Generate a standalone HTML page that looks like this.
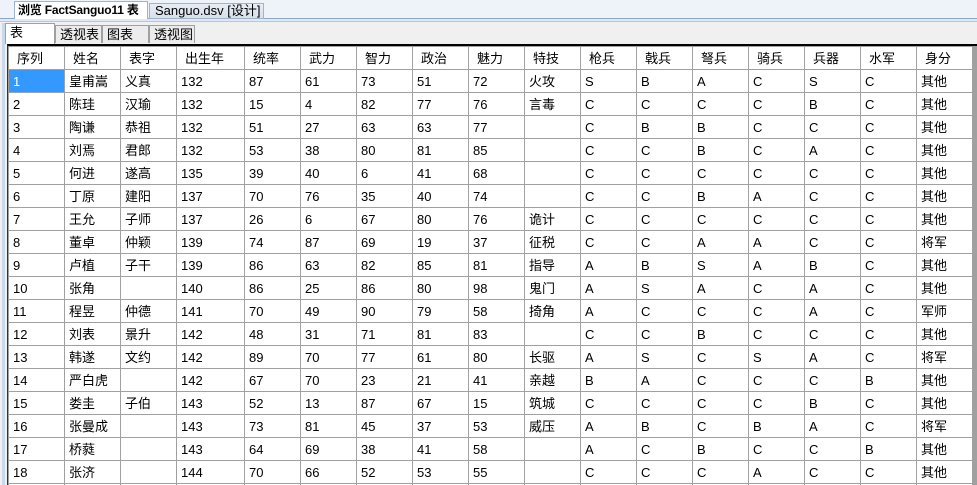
<!DOCTYPE html>
<html><head><meta charset="utf-8"><style>
*{margin:0;padding:0;box-sizing:border-box}
html,body{width:977px;height:485px;overflow:hidden}
body{background:#f0f0f0;font-family:"Liberation Sans","Noto Sans CJK SC",sans-serif;font-size:13px;color:#000;position:relative}
.top{position:absolute;left:0;top:0;width:977px;height:19px;background:#eef3fa;border-bottom:1px solid #8ba7c4}
.t1{position:absolute;left:14px;top:1px;width:134px;height:18px;padding:0 3px;font-weight:bold;font-size:12px;background:#fff;border:1px solid #9fb4cc;border-bottom:none;line-height:16px;white-space:nowrap;overflow:hidden;letter-spacing:-0.2px}
.t2{position:absolute;left:149px;top:3px;height:16px;width:115px;padding-left:5px;font-size:13px;background:linear-gradient(#e8eef6,#d7e0ec);border:1px solid #9fb4cc;line-height:14px}
.line2{position:absolute;left:0;top:19px;width:977px;height:3px;background:#dfe9f5;border-bottom:1px solid #b4c8dc}
.st{position:absolute;top:25px;height:18px;border:1px solid #a0a0a0;border-bottom:none;background:#ececec;padding-left:4px;line-height:17px}
.grid{position:absolute;left:7px;top:44px;width:970px;height:441px;background:#a0a0a0;border-top:2px solid #000;border-left:1px solid #333;overflow:hidden}
table{border-collapse:collapse;table-layout:fixed;background:#fff}
td{border:1px solid #a0a0a0;height:23px;padding:1px 0 0 4px;white-space:nowrap;overflow:hidden;line-height:20px}
tr.h td{height:23px;padding-left:8px}
td.sel{background:#3399ff;color:#fff}
</style></head><body>
<div class="top"></div>
<div class="t1">浏览 FactSanguo11 表</div>
<div class="t2">Sanguo.dsv [设计]</div>
<div class="line2"></div>
<div style="position:absolute;left:2px;top:23px;width:3px;height:462px;background:#c9d9ec"></div>
<div class="st" style="left:5px;top:23px;width:50px;height:21px;background:#fff;z-index:2">表</div>
<div class="st" style="left:55px;width:47px">透视表</div>
<div class="st" style="left:102px;width:47px">图表</div>
<div class="st" style="left:149px;width:46px">透视图</div>
<div class="grid">
<table>
<colgroup><col style="width:56px"><col style="width:56px"><col style="width:56px"><col style="width:68px"><col style="width:56px"><col style="width:56px"><col style="width:56px"><col style="width:56px"><col style="width:56px"><col style="width:56px"><col style="width:56px"><col style="width:56px"><col style="width:56px"><col style="width:56px"><col style="width:56px"><col style="width:56px"><col style="width:56px"></colgroup>
<tr class="h"><td>序列</td><td>姓名</td><td>表字</td><td>出生年</td><td>统率</td><td>武力</td><td>智力</td><td>政治</td><td>魅力</td><td>特技</td><td>枪兵</td><td>戟兵</td><td>弩兵</td><td>骑兵</td><td>兵器</td><td>水军</td><td>身分</td></tr>
<tr><td class="sel">1</td><td>皇甫嵩</td><td>义真</td><td>132</td><td>87</td><td>61</td><td>73</td><td>51</td><td>72</td><td>火攻</td><td>S</td><td>B</td><td>A</td><td>C</td><td>S</td><td>C</td><td>其他</td></tr>
<tr><td>2</td><td>陈珪</td><td>汉瑜</td><td>132</td><td>15</td><td>4</td><td>82</td><td>77</td><td>76</td><td>言毒</td><td>C</td><td>C</td><td>C</td><td>C</td><td>B</td><td>C</td><td>其他</td></tr>
<tr><td>3</td><td>陶谦</td><td>恭祖</td><td>132</td><td>51</td><td>27</td><td>63</td><td>63</td><td>77</td><td></td><td>C</td><td>B</td><td>B</td><td>C</td><td>C</td><td>C</td><td>其他</td></tr>
<tr><td>4</td><td>刘焉</td><td>君郎</td><td>132</td><td>53</td><td>38</td><td>80</td><td>81</td><td>85</td><td></td><td>C</td><td>C</td><td>B</td><td>C</td><td>A</td><td>C</td><td>其他</td></tr>
<tr><td>5</td><td>何进</td><td>遂高</td><td>135</td><td>39</td><td>40</td><td>6</td><td>41</td><td>68</td><td></td><td>C</td><td>C</td><td>C</td><td>C</td><td>C</td><td>C</td><td>其他</td></tr>
<tr><td>6</td><td>丁原</td><td>建阳</td><td>137</td><td>70</td><td>76</td><td>35</td><td>40</td><td>74</td><td></td><td>C</td><td>C</td><td>B</td><td>A</td><td>C</td><td>C</td><td>其他</td></tr>
<tr><td>7</td><td>王允</td><td>子师</td><td>137</td><td>26</td><td>6</td><td>67</td><td>80</td><td>76</td><td>诡计</td><td>C</td><td>C</td><td>C</td><td>C</td><td>C</td><td>C</td><td>其他</td></tr>
<tr><td>8</td><td>董卓</td><td>仲颖</td><td>139</td><td>74</td><td>87</td><td>69</td><td>19</td><td>37</td><td>征税</td><td>C</td><td>C</td><td>A</td><td>A</td><td>C</td><td>C</td><td>将军</td></tr>
<tr><td>9</td><td>卢植</td><td>子干</td><td>139</td><td>86</td><td>63</td><td>82</td><td>85</td><td>81</td><td>指导</td><td>A</td><td>B</td><td>S</td><td>A</td><td>B</td><td>C</td><td>其他</td></tr>
<tr><td>10</td><td>张角</td><td></td><td>140</td><td>86</td><td>25</td><td>86</td><td>80</td><td>98</td><td>鬼门</td><td>A</td><td>S</td><td>A</td><td>C</td><td>A</td><td>C</td><td>其他</td></tr>
<tr><td>11</td><td>程昱</td><td>仲德</td><td>141</td><td>70</td><td>49</td><td>90</td><td>79</td><td>58</td><td>掎角</td><td>A</td><td>C</td><td>C</td><td>C</td><td>A</td><td>C</td><td>军师</td></tr>
<tr><td>12</td><td>刘表</td><td>景升</td><td>142</td><td>48</td><td>31</td><td>71</td><td>81</td><td>83</td><td></td><td>C</td><td>C</td><td>B</td><td>C</td><td>C</td><td>C</td><td>其他</td></tr>
<tr><td>13</td><td>韩遂</td><td>文约</td><td>142</td><td>89</td><td>70</td><td>77</td><td>61</td><td>80</td><td>长驱</td><td>A</td><td>S</td><td>C</td><td>S</td><td>A</td><td>C</td><td>将军</td></tr>
<tr><td>14</td><td>严白虎</td><td></td><td>142</td><td>67</td><td>70</td><td>23</td><td>21</td><td>41</td><td>亲越</td><td>B</td><td>A</td><td>C</td><td>C</td><td>C</td><td>B</td><td>其他</td></tr>
<tr><td>15</td><td>娄圭</td><td>子伯</td><td>143</td><td>52</td><td>13</td><td>87</td><td>67</td><td>15</td><td>筑城</td><td>C</td><td>C</td><td>C</td><td>C</td><td>B</td><td>C</td><td>其他</td></tr>
<tr><td>16</td><td>张曼成</td><td></td><td>143</td><td>73</td><td>81</td><td>45</td><td>37</td><td>53</td><td>威压</td><td>A</td><td>B</td><td>C</td><td>B</td><td>A</td><td>C</td><td>将军</td></tr>
<tr><td>17</td><td>桥蕤</td><td></td><td>143</td><td>64</td><td>69</td><td>38</td><td>41</td><td>58</td><td></td><td>A</td><td>C</td><td>B</td><td>C</td><td>C</td><td>B</td><td>其他</td></tr>
<tr><td>18</td><td>张济</td><td></td><td>144</td><td>70</td><td>66</td><td>52</td><td>53</td><td>55</td><td></td><td>C</td><td>C</td><td>C</td><td>A</td><td>C</td><td>C</td><td>其他</td></tr>
<tr><td>19</td><td></td><td></td><td></td><td></td><td></td><td></td><td></td><td></td><td></td><td></td><td></td><td></td><td></td><td></td><td></td><td></td></tr>
</table>
</div>
</body></html>
